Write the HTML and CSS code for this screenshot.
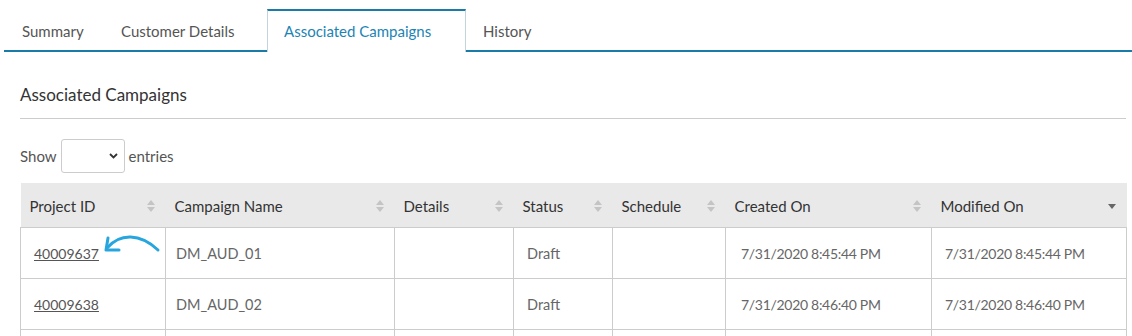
FILE: index.html
```html
<!DOCTYPE html>
<html>
<head>
<meta charset="utf-8">
<link rel="stylesheet" href="styles.css">
</head>
<body>
<div class="tabs">
  <div class="tab tab-summary">Summary</div>
  <div class="tab tab-customer">Customer Details</div>
  <div class="tab tab-active">Associated Campaigns</div>
  <div class="tab tab-history">History</div>
</div>
<div class="content">
  <h2 class="title">Associated Campaigns</h2>
  <div class="divider"></div>
  <div class="length">
    <span>Show</span>
    <div class="select">
      <svg width="9" height="6" viewBox="0 0 9 6"><path d="M1 1 L4.5 4.5 L8 1" fill="none" stroke="#333" stroke-width="1.8"/></svg>
    </div>
    <span>entries</span>
  </div>
  <table class="grid">
    <colgroup>
      <col style="width:145px"><col style="width:229px"><col style="width:119px"><col style="width:99px"><col style="width:113px"><col style="width:206px"><col style="width:195px">
    </colgroup>
    <thead>
      <tr>
        <th><span>Project ID</span><i class="sort"></i></th>
        <th><span>Campaign Name</span><i class="sort"></i></th>
        <th><span>Details</span><i class="sort"></i></th>
        <th><span>Status</span><i class="sort"></i></th>
        <th><span>Schedule</span><i class="sort"></i></th>
        <th><span>Created On</span><i class="sort"></i></th>
        <th><span>Modified On</span><i class="sort desc"></i></th>
      </tr>
    </thead>
    <tbody>
      <tr>
        <td class="idcell"><a href="#">40009637</a>
          <svg class="arrow" width="62" height="24" viewBox="0 0 62 24"><path d="M7 13 C 20 -2, 40 -2, 58 15" fill="none" stroke="#27a5de" stroke-width="3" stroke-linecap="round"/><path d="M8 3 L6 15 L19 15" fill="none" stroke="#27a5de" stroke-width="3" stroke-linecap="round" stroke-linejoin="round"/></svg>
        </td>
        <td>DM_AUD_01</td><td></td><td>Draft</td><td></td><td class="date">7/31/2020 8:45:44 PM</td><td class="date">7/31/2020 8:45:44 PM</td>
      </tr>
      <tr>
        <td class="idcell"><a href="#">40009638</a></td>
        <td>DM_AUD_02</td><td></td><td>Draft</td><td></td><td class="date">7/31/2020 8:46:40 PM</td><td class="date">7/31/2020 8:46:40 PM</td>
      </tr>
      <tr class="cut"><td></td><td></td><td></td><td></td><td></td><td></td><td></td></tr>
    </tbody>
  </table>
</div>
</body>
</html>
```

FILE: styles.css
```css
* { box-sizing: border-box; }
html, body { margin: 0; padding: 0; background: #fff; overflow: hidden; }
body {
  font-family: "Lato", "Source Sans Pro", "Liberation Sans", sans-serif;
  font-size: 15px;
  color: #333;
  width: 1132px;
  height: 336px;
}
.tabs {
  display: flex;
  align-items: flex-end;
  margin: 9px 0 0 4px;
  height: 43px;
  border-bottom: 2px solid #1a7aa8;
}
.tab {
  height: 41px;
  line-height: 40px;
  color: #555;
  margin-bottom: -2px;
  white-space: nowrap;
}
.tab-summary { width: 99px; padding-left: 18px; }
.tab-customer { width: 147px; padding-left: 18px; margin-right: 17px; }
.tab-active {
  width: 199px;
  height: 43px;
  line-height: 40px;
  color: #1c84b4;
  background: #fff;
  border-top: 2px solid #1a7aa8;
  border-left: 1px solid #c5d3dc;
  border-right: 1px solid #c5d3dc;
  padding-left: 16px;
}
.tab-history { padding-left: 17px; }
.content { padding: 0 6px 0 20px; }
.title {
  margin: 0;
  padding-top: 33px;
  height: 66px;
  line-height: 20px;
  font-size: 17px;
  font-weight: normal;
  color: #333;
}
.divider { height: 1px; background: #ccc; }
.length {
  display: flex;
  align-items: center;
  gap: 4px;
  margin-top: 20px;
  height: 34px;
  color: #555;
}
.select {
  width: 64px;
  height: 34px;
  border: 1px solid #ccc;
  border-radius: 3px;
  display: flex;
  align-items: center;
  justify-content: flex-end;
  padding-right: 6px;
}
.grid {
  margin-top: 10px;
  border-collapse: collapse;
  table-layout: fixed;
  width: 1106px;
}
.grid th {
  background: #e9e9e9;
  height: 44px;
  text-align: left;
  font-weight: normal;
  color: #333;
  padding: 2px 10px 0 9px;
  position: relative;
}
.sort {
  position: absolute;
  right: 10px;
  top: 50%;
  width: 9px;
  height: 14px;
  margin-top: -6px;
}
.sort::before, .sort::after {
  content: "";
  position: absolute;
  left: 0;
  border-left: 4.5px solid transparent;
  border-right: 4.5px solid transparent;
}
.sort::before { top: 1px; border-bottom: 5px solid #c4c4c4; }
.sort::after { top: 8px; border-top: 5px solid #c4c4c4; }
.sort.desc::before { display: none; }
.sort.desc::after { top: 5px; border-top-color: #666; }
.grid td {
  height: 51px;
  border: 1px solid #ccc;
  padding: 2px 13px 0;
  color: #666;
  font-size: 14.5px;
}
.grid td.date { font-size: 14px; letter-spacing: -0.3px; }
.grid td:nth-child(2) { padding-left: 10px; }
.grid td:nth-child(6) { padding-left: 15px; }
.idcell { position: relative; }
.idcell a { color: #555; text-decoration: underline; font-size: 14px; }
.arrow { position: absolute; left: 79px; top: 7px; }
.grid tr.cut td { height: 10px; }
```
